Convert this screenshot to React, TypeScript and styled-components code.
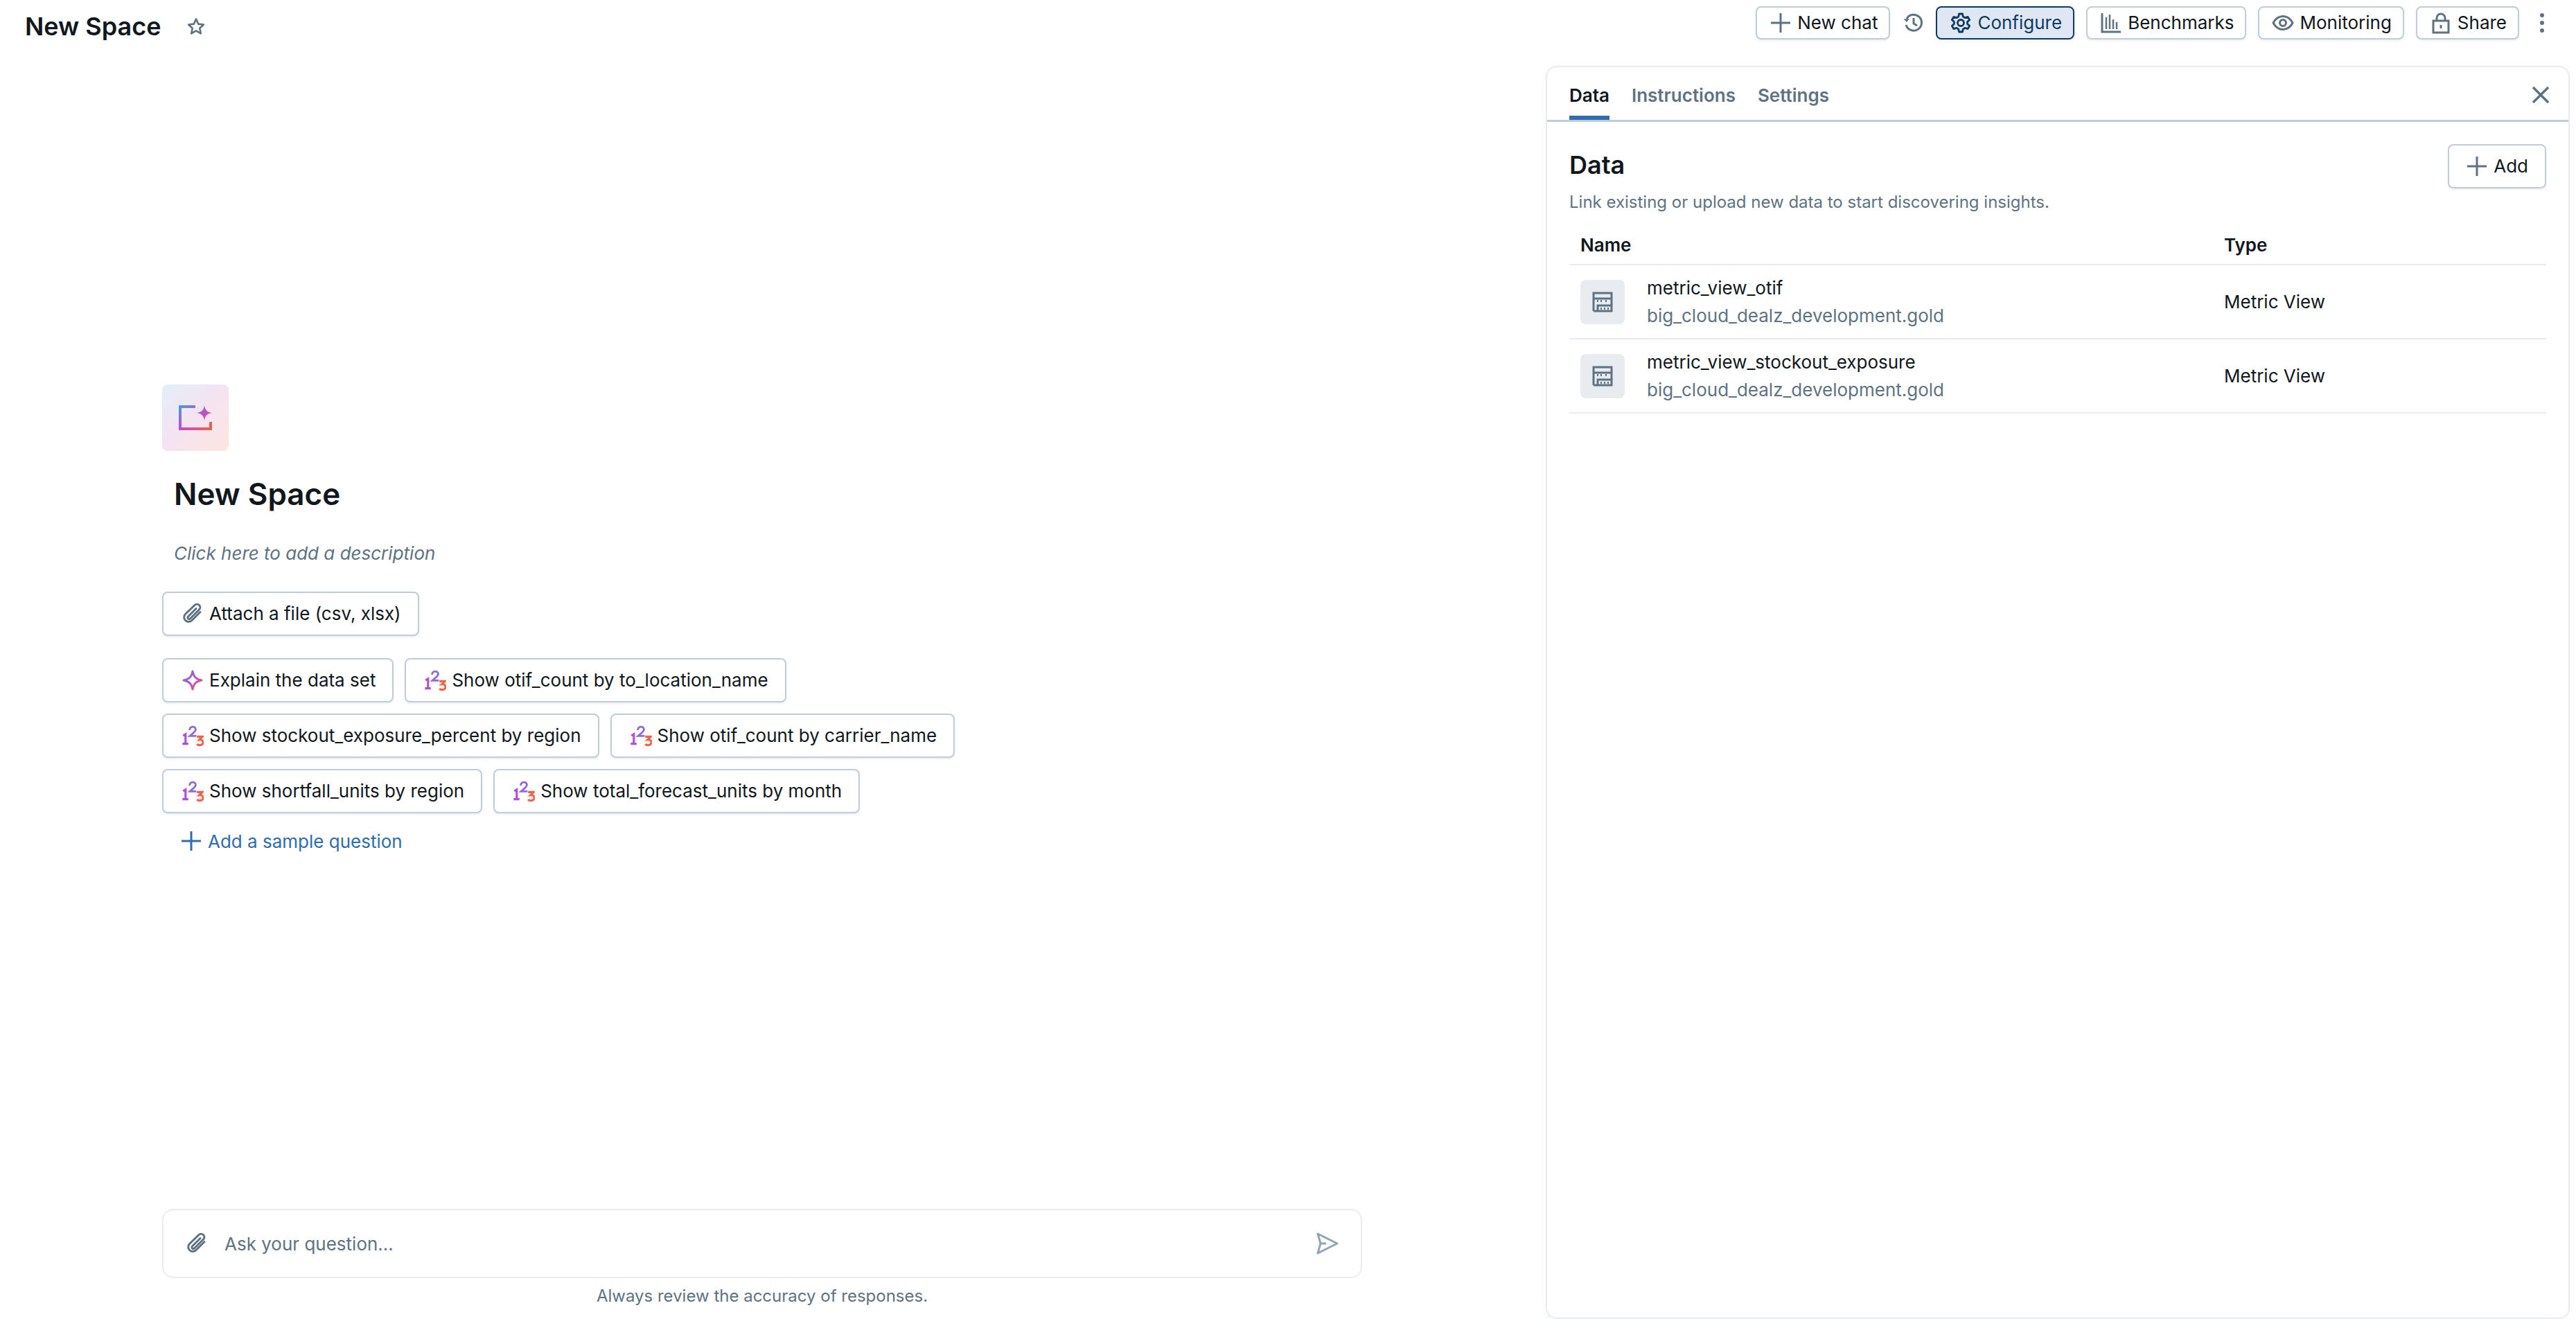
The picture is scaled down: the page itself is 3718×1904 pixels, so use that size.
import React from 'react';
import styled, { createGlobalStyle } from 'styled-components';

const GlobalStyle = createGlobalStyle`
  html, body {
    margin: 0;
    padding: 0;
    background: #fff;
    font-family: Inter, 'Liberation Sans', sans-serif;
    color: #11171c;
  }
  * { box-sizing: border-box; }
`;

const INK = '#11171c';
const MUTED = '#5f7281';
const LINE = '#c0cdd8';
const SOFT = '#e8ecf0';
const BLUE = '#2f6cb0';

const Page = styled.div`
  width: 3718px;
  height: 1904px;
  display: flex;
  flex-direction: column;
  overflow: hidden;
`;

const TopBar = styled.header`
  height: 95px;
  flex: none;
  display: flex;
  align-items: flex-start;
  padding: 9px 36px 0;
  justify-content: space-between;
`;

const TitleGroup = styled.div`
  display: flex;
  align-items: center;
  gap: 36px;
  height: 58px;
`;

const PageTitle = styled.h1`
  margin: 0;
  font-size: 36px;
  line-height: 56px;
  font-weight: 600;
`;

const Actions = styled.div`
  display: flex;
  align-items: center;
  gap: 17px;
  margin-right: -3px;
`;

const Button = styled.button<{ $active?: boolean }>`
  height: 48px;
  display: inline-flex;
  align-items: center;
  gap: 8px;
  padding: 0 16px 0 18px;
  border-radius: 8px;
  border: 2px solid ${(p) => (p.$active ? '#0e3a66' : LINE)};
  background: ${(p) => (p.$active ? '#dfe8f2' : '#fff')};
  color: ${(p) => (p.$active ? '#0e3a66' : INK)};
  font: 400 26px/32px Inter, 'Liberation Sans', sans-serif;
  box-shadow: 0 2px 3px rgba(31, 39, 45, 0.08);
  white-space: nowrap;
`;

const IconSlot = styled.span<{ $size?: number; $color?: string }>`
  width: ${(p) => p.$size ?? 32}px;
  height: ${(p) => p.$size ?? 32}px;
  flex: none;
  display: inline-flex;
  align-items: center;
  justify-content: center;
  color: ${(p) => p.$color ?? MUTED};
  svg { display: block; width: 100%; height: 100%; }
`;

const Body = styled.div`
  flex: 1;
  min-height: 0;
  display: flex;
`;

const ChatColumn = styled.main`
  width: 2231px;
  flex: none;
  padding: 460px 265px 0 234px;
  display: flex;
  flex-direction: column;
`;

const Logo = styled.div`
  width: 96px;
  height: 96px;
  border-radius: 8px;
  background: linear-gradient(135deg, #e3eff8 0%, #f5e3f2 50%, #fde6df 100%);
  display: flex;
  align-items: center;
  justify-content: center;
`;

const SpaceTitle = styled.h2`
  margin: 32px 0 0 17px;
  font-size: 44px;
  line-height: 60px;
  font-weight: 600;
`;

const Description = styled.p`
  margin: 36px 0 0 17px;
  font-size: 26px;
  line-height: 40px;
  font-style: italic;
  color: ${MUTED};
`;

const Chip = styled(Button)`
  height: 64px;
  padding: 0 24px 0 26px;
  gap: 8px;
  align-self: flex-start;
`;

const AttachChip = styled(Chip)`
  margin-top: 35px;
`;

const ChipRows = styled.div`
  margin-top: 32px;
  display: flex;
  flex-direction: column;
  gap: 16px;
`;

const ChipRow = styled.div`
  display: flex;
  gap: 16px;
`;

const AddQuestion = styled.a`
  margin: 24px 0 0 26px;
  height: 32px;
  display: inline-flex;
  align-items: center;
  gap: 8px;
  align-self: flex-start;
  font-size: 26px;
  color: ${BLUE};
`;

const Composer = styled.div`
  margin-top: auto;
  height: 100px;
  border: 2px solid ${SOFT};
  border-radius: 16px;
  display: flex;
  align-items: center;
  padding: 0 32px;
  gap: 24px;
`;

const Placeholder = styled.span`
  flex: 1;
  font-size: 26px;
  color: ${MUTED};
`;

const Hint = styled.p`
  margin: 10px 0 17px;
  text-align: center;
  font-size: 24px;
  line-height: 32px;
  color: ${MUTED};
`;

const Panel = styled.aside`
  width: 1478px;
  flex: none;
  border: 2px solid ${SOFT};
  border-radius: 16px;
  box-shadow: 0 2px 8px rgba(31, 39, 45, 0.04);
  display: flex;
  flex-direction: column;
`;

const TabBar = styled.div`
  height: 79px;
  flex: none;
  border-bottom: 3px solid ${LINE};
  display: flex;
  align-items: stretch;
  gap: 32px;
  padding: 0 32px;
  position: relative;
`;

const Tab = styled.div<{ $active?: boolean }>`
  display: flex;
  align-items: center;
  padding-top: 10px;
  font-size: 26px;
  font-weight: 600;
  color: ${(p) => (p.$active ? INK : MUTED)};
  border-bottom: 6px solid ${(p) => (p.$active ? BLUE : 'transparent')};
`;

const CloseButton = styled.span`
  position: absolute;
  right: 20px;
  top: 20px;
  width: 40px;
  height: 40px;
  display: flex;
  color: ${MUTED};
  svg { width: 100%; height: 100%; }
`;

const PanelBody = styled.div`
  padding: 32px 32px 0;
`;

const SectionHead = styled.div`
  display: flex;
  justify-content: space-between;
  align-items: flex-start;
`;

const SectionTitle = styled.h3`
  margin: 0;
  font-size: 36px;
  line-height: 60px;
  font-weight: 600;
`;

const SectionText = styled.p`
  margin: 8px 0 0;
  font-size: 24px;
  line-height: 32px;
  color: ${MUTED};
`;

const AddButton = styled(Chip)`
  padding: 0 24px 0 24px;
`;

const Table = styled.div`
  margin-top: 18px;
`;

const TableRow = styled.div<{ $head?: boolean }>`
  display: grid;
  grid-template-columns: 929px 1fr;
  align-items: center;
  height: ${(p) => (p.$head ? 57 : 107)}px;
  padding-left: 16px;
  border-bottom: 2px solid ${SOFT};
  font-size: 26px;
`;

const HeadCell = styled.div`
  font-weight: 600;
`;

const NameCell = styled.div`
  display: flex;
  align-items: center;
  gap: 32px;
`;

const IconTile = styled.div`
  width: 64px;
  height: 64px;
  border-radius: 8px;
  background: #e8ecf0;
  display: flex;
  align-items: center;
  justify-content: center;
`;

const NameText = styled.div`
  line-height: 40px;
`;

const SubText = styled.div`
  line-height: 40px;
  color: ${MUTED};
`;

const PlusIcon = () => (
  <svg viewBox="0 0 32 32" fill="none" stroke="currentColor" strokeWidth="3">
    <path d="M16 2v28M2 16h28" />
  </svg>
);

const StarIcon = () => (
  <svg viewBox="0 0 32 32" fill="none" stroke="currentColor" strokeWidth="3" strokeLinejoin="round">
    <path d="M16 4l3.7 8.1 8.8 1-6.5 6 1.8 8.7L16 23.4l-7.8 4.4L10 19.1l-6.5-6 8.8-1z" />
  </svg>
);

const HistoryIcon = () => (
  <svg viewBox="0 0 32 32" fill="none" stroke="currentColor" strokeWidth="3">
    <path d="M6 19a11.5 11.5 0 1 0 1-9" />
    <path d="M2.5 10.500 7 15l4-5z" fill="currentColor" stroke="none" />
    <path d="M17 9v8l5 3" />
  </svg>
);

const GearIcon = () => (
  <svg viewBox="0 0 32 32" fill="none" stroke="currentColor" strokeWidth="2.800" strokeLinejoin="round">
    <circle cx="16" cy="16" r="4.500" />
    <path d="M13.500 3h5l.8 4 3 1.700 3.900-1.300 2.500 4.300-3.100 2.700v3.200l3.100 2.700-2.500 4.300-3.900-1.300-3 1.700-.8 4h-5l-.8-4-3-1.700-3.900 1.300-2.500-4.300 3.100-2.700v-3.200L3.300 11.700l2.500-4.300 3.900 1.300 3-1.700z" />
  </svg>
);

const BarsIcon = () => (
  <svg viewBox="0 0 32 32" fill="none" stroke="currentColor" strokeWidth="2.500">
    <path d="M3 2v27h27" strokeWidth="3" />
    <path d="M9 8v17M14 4v21M19 11v14M24 15v10" />
  </svg>
);

const EyeIcon = () => (
  <svg viewBox="0 0 32 32" fill="none" stroke="currentColor" strokeWidth="3">
    <path d="M2 16c3.500-6.500 8-9.500 14-9.500S26.500 9.500 30 16c-3.500 6.500-8 9.500-14 9.500S5.500 22.500 2 16z" />
    <circle cx="16" cy="16" r="4.500" />
  </svg>
);

const LockIcon = () => (
  <svg viewBox="0 0 32 32" fill="none" stroke="currentColor" strokeWidth="3">
    <rect x="5" y="13" width="22" height="17" />
    <path d="M10 13V9a6 6 0 0 1 12 0v4M16 19v5" />
  </svg>
);

const KebabIcon = () => (
  <svg viewBox="0 0 32 32" fill="currentColor">
    <circle cx="16" cy="5" r="3" />
    <circle cx="16" cy="16" r="3" />
    <circle cx="16" cy="27" r="3" />
  </svg>
);

const CloseIcon = () => (
  <svg viewBox="0 0 40 40" fill="none" stroke="currentColor" strokeWidth="3.500">
    <path d="M9 9l22 22M31 9L9 31" />
  </svg>
);

const ClipIcon = () => (
  <svg viewBox="0 0 32 32" fill="none" stroke="currentColor" strokeWidth="3" strokeLinecap="round">
    <path d="M27 13.500L15 25.500a6.500 6.500 0 0 1-9.500-9L19 3.500a4.500 4.500 0 0 1 6.500 6.500L12.500 23a2 2 0 0 1-3-3L21 8.500" />
  </svg>
);

const SendIcon = () => (
  <svg viewBox="0 0 32 32" fill="none" stroke="currentColor" strokeWidth="3" strokeLinejoin="round">
    <path d="M2 2l28 14L2 30l4-14zM6 16h8" />
  </svg>
);

const MetricIcon = () => (
  <svg viewBox="0 0 32 32" fill="none" stroke="currentColor" strokeWidth="3">
    <path d="M3 29V3h26v18M3 11h26" />
    <path d="M3 29h26v-8H9v8" />
    <path d="M14 16v-3M21 16v-3M9 16v-3M14 27v-3M19 27v-3M24 27v-3" strokeWidth="2" />
  </svg>
);

const SparkleIcon = () => (
  <svg viewBox="0 0 32 32" fill="none" stroke="url(#sparkleStroke)" strokeWidth="3" strokeLinejoin="round">
    <defs>
      <linearGradient id="sparkleStroke" x1="0" y1="0" x2="1" y2="1">
        <stop offset="0" stopColor="#4a8ee0" />
        <stop offset="0.5" stopColor="#b94fd0" />
        <stop offset="1" stopColor="#f2644a" />
      </linearGradient>
    </defs>
    <path d="M16 3c1.500 8 5 11.500 13 13-8 1.500-11.500 5-13 13-1.500-8-5-11.500-13-13 8-1.500 11.500-5 13-13z" />
  </svg>
);

const NumbersIcon = () => (
  <svg viewBox="0 0 36 36" fill="none" strokeWidth="3.600">
    <path d="M2.500 18l4-2.500V31M1.500 31H11" stroke="#b34fd6" />
    <path d="M13 9c.5-7 10-7 10-1.200 0 3-3.500 5.500-9.500 10.700H24" stroke="#8a6be0" strokeWidth="3.200" />
    <path d="M25 19.500h9l-5 5c6-.5 7 4 5 7-2 2.500-7 2.500-9 0" stroke="#f2644a" />
  </svg>
);

const LogoMark = () => (
  <svg width="48" height="36" viewBox="0 0 48 36" fill="none">
    <defs>
      <linearGradient id="logoStroke" x1="0" y1="0" x2="1" y2="1">
        <stop offset="0" stopColor="#4a9ae0" />
        <stop offset="0.5" stopColor="#c04bd0" />
        <stop offset="1" stopColor="#f4603c" />
      </linearGradient>
    </defs>
    <path d="M24 2H2v32h44V24" stroke="url(#logoStroke)" strokeWidth="4" />
    <path d="M37 0c1 7 4 10 11 11-7 1-10 4-11 11-1-7-4-10-11-11 7-1 10-4 11-11z" fill="url(#logoStroke)" />
  </svg>
);

const questions: string[][] = [
  ['Show otif_count by to_location_name'],
  ['Show stockout_exposure_percent by region', 'Show otif_count by carrier_name'],
  ['Show shortfall_units by region', 'Show total_forecast_units by month'],
];

const dataRows = ['metric_view_otif', 'metric_view_stockout_exposure'];

function QuestionChip({ text }: { text: string }) {
  return (
    <Chip>
      <IconSlot><NumbersIcon /></IconSlot>
      {text}
    </Chip>
  );
}

export default function App() {
  return (
    <Page>
      <GlobalStyle />
      <TopBar>
        <TitleGroup>
          <PageTitle>New Space</PageTitle>
          <IconSlot $size={28}><StarIcon /></IconSlot>
        </TitleGroup>
        <Actions>
          <Button><IconSlot><PlusIcon /></IconSlot>New chat</Button>
          <IconSlot><HistoryIcon /></IconSlot>
          <Button $active><IconSlot $color="#0e3a66"><GearIcon /></IconSlot>Configure</Button>
          <Button><IconSlot><BarsIcon /></IconSlot>Benchmarks</Button>
          <Button><IconSlot><EyeIcon /></IconSlot>Monitoring</Button>
          <Button><IconSlot><LockIcon /></IconSlot>Share</Button>
          <IconSlot><KebabIcon /></IconSlot>
        </Actions>
      </TopBar>
      <Body>
        <ChatColumn>
          <Logo><LogoMark /></Logo>
          <SpaceTitle>New Space</SpaceTitle>
          <Description>Click here to add a description</Description>
          <AttachChip><IconSlot><ClipIcon /></IconSlot>Attach a file (csv, xlsx)</AttachChip>
          <ChipRows>
            <ChipRow>
              <Chip><IconSlot><SparkleIcon /></IconSlot>Explain the data set</Chip>
              <QuestionChip text={questions[0][0]} />
            </ChipRow>
            {questions.slice(1).map((row) => (
              <ChipRow key={row[0]}>
                {row.map((q) => <QuestionChip key={q} text={q} />)}
              </ChipRow>
            ))}
          </ChipRows>
          <AddQuestion><IconSlot $color={BLUE}><PlusIcon /></IconSlot>Add a sample question</AddQuestion>
          <Composer>
            <IconSlot><ClipIcon /></IconSlot>
            <Placeholder>Ask your question...</Placeholder>
            <IconSlot $color="#92a4b3"><SendIcon /></IconSlot>
          </Composer>
          <Hint>Always review the accuracy of responses.</Hint>
        </ChatColumn>
        <Panel>
          <TabBar>
            <Tab $active>Data</Tab>
            <Tab>Instructions</Tab>
            <Tab>Settings</Tab>
            <CloseButton><CloseIcon /></CloseButton>
          </TabBar>
          <PanelBody>
            <SectionHead>
              <div>
                <SectionTitle>Data</SectionTitle>
                <SectionText>Link existing or upload new data to start discovering insights.</SectionText>
              </div>
              <AddButton><IconSlot><PlusIcon /></IconSlot>Add</AddButton>
            </SectionHead>
            <Table>
              <TableRow $head>
                <HeadCell>Name</HeadCell>
                <HeadCell>Type</HeadCell>
              </TableRow>
              {dataRows.map((name) => (
                <TableRow key={name}>
                  <NameCell>
                    <IconTile><IconSlot><MetricIcon /></IconSlot></IconTile>
                    <div>
                      <NameText>{name}</NameText>
                      <SubText>big_cloud_dealz_development.gold</SubText>
                    </div>
                  </NameCell>
                  <div>Metric View</div>
                </TableRow>
              ))}
            </Table>
          </PanelBody>
        </Panel>
      </Body>
    </Page>
  );
}
